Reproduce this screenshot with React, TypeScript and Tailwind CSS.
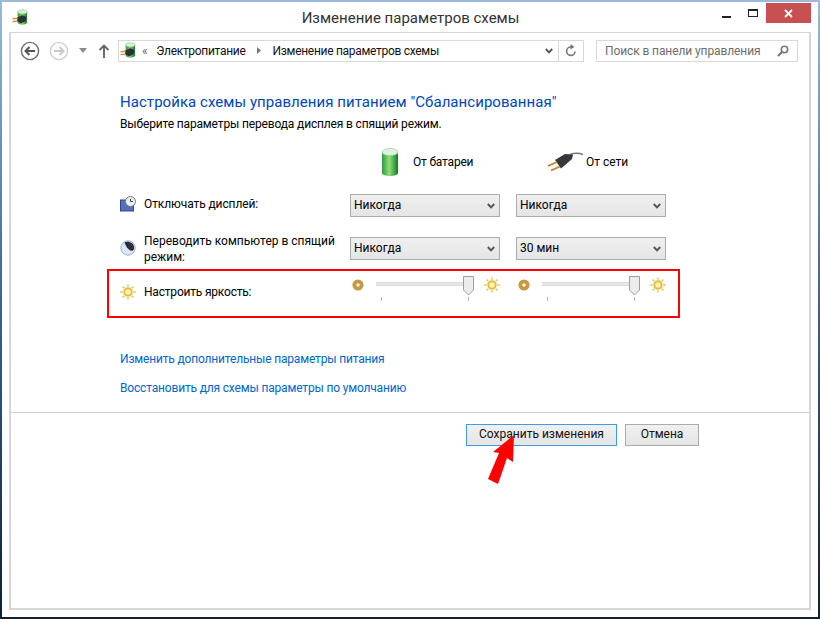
import React from "react";

const font = { fontFamily: 'Roboto,"Noto Sans",sans-serif' };

function PowerIcon({ size = 18, id }: { size?: number; id: string }) {
  return (
    <svg width={size} height={size} viewBox="0 0 18 18">
      <defs>
        <linearGradient id={id} x1="0" x2="1" y1="0" y2="0">
          <stop offset="0" stopColor="#2f9b37" />
          <stop offset="0.5" stopColor="#6fd36a" />
          <stop offset="1" stopColor="#1e7f2e" />
        </linearGradient>
      </defs>
      <path d="M6 3 C6 1 16 1 16 3 L16 14 C16 17.5 6 17.5 6 14 Z" fill={`url(#${id})`} />
      <ellipse cx="11" cy="3" rx="5" ry="2.2" fill="#d8f0d4" stroke="#86b987" strokeWidth="0.5" />
      <path d="M5.5 9 L11 6.5 L15.5 8.5 L14.5 13 L9.5 15 L5.5 13 Z" fill="#2d3034" />
      <path d="M0.5 10.5 L6 9.8 M0.5 13.4 L6 12.8" stroke="#c2922f" strokeWidth="1.5" />
    </svg>
  );
}

function Sun() {
  const rays = [0, 45, 90, 135, 180, 225, 270, 315];
  return (
    <svg width="16" height="16" viewBox="0 0 16 16">
      {rays.map((a) => (
        <path key={a} d="M7.1 0.4 H8.9 L8.5 3 H7.5 Z" fill="#d6c56a" transform={`rotate(${a} 8 8)`} />
      ))}
      <circle cx="8" cy="8" r="3.7" fill="#fbf3b8" stroke="#e3bd38" strokeWidth="1.9" />
      <circle cx="8" cy="8" r="5.4" fill="none" stroke="#efe6b0" strokeWidth="0.6" />
    </svg>
  );
}

function SmallSun() {
  return (
    <svg width="12" height="12" viewBox="0 0 12 12">
      <circle cx="6" cy="6" r="3.6" fill="none" stroke="#c49a45" strokeWidth="4" />
      <circle cx="6" cy="6" r="1.4" fill="#fff8de" />
    </svg>
  );
}

function Chevron() {
  return (
    <svg width="8" height="6" viewBox="0 0 8 6">
      <path d="M0.8 1 L4 4.4 L7.2 1" fill="none" stroke="#555" strokeWidth="1.9" />
    </svg>
  );
}

function Select({ value }: { value: string }) {
  return (
    <div className="w-[150px] h-[23px] border border-[#acacac] bg-gradient-to-b from-[#f0f0f0] to-[#e5e5e5] flex items-center justify-between pl-[3px] pr-[4px] text-[12px] text-black">
      <span className="mb-[2px]">{value}</span>
      <Chevron />
    </div>
  );
}

function Slider() {
  return (
    <div className="w-[150px] h-[28px] flex items-start">
      <div className="mt-[2px] ml-[2px] w-[12px] h-[12px] flex"><SmallSun /></div>
      <div className="relative ml-[12px] w-[98px] h-[26px]">
        <div className="mt-[5px] w-[92px] h-[4px] bg-[#e7e7e7] border-y border-[#dcdcdc]" />
        <div className="flex justify-between w-[93px] mt-[11px] pl-[5px]">
          <div className="w-px h-[4px] bg-[#b5b5b5]" />
          <div className="w-px h-[4px] bg-[#b5b5b5]" />
        </div>
        <svg className="absolute left-[87px] -top-[1px]" width="11" height="20" viewBox="0 0 11 20">
          <path d="M0.5 0.5 H10.5 V14 L5.5 19 L0.5 14 Z" fill="#ececec" stroke="#9e9e9e" />
        </svg>
      </div>
      <div className="ml-[10px]"><Sun /></div>
    </div>
  );
}

export default function App() {
  return (
    <div
      className="relative w-[820px] h-[619px] overflow-hidden p-[2px] bg-gradient-to-b from-[#9dbbd8] via-[#3f6088] to-[#10212f]"
      style={font}
    >
      <div className="w-[816px] h-[615px] bg-white flex flex-col px-[7px] pb-[7px]">
        {/* title bar */}
        <div className="h-[30px] flex shrink-0">
          <div className="mt-[7px] ml-[3px]"><PowerIcon size={17} id="p1" /></div>
          <div className="flex-1 text-center text-[15px] leading-[20px] mt-[6px] text-[#333] pl-[79px]">Изменение параметров схемы</div>
          <div className="flex items-start text-black">
            <div className="w-[26px] h-[21px] flex justify-center pt-[14px]"><div className="w-[9px] h-[2px] bg-[#222]" /></div>
            <div className="w-[27px] h-[21px] flex justify-center pt-[7px]"><div className="w-[10px] h-[8px] border border-t-2 border-[#222]" /></div>
            <div className="w-[45px] h-[20px] mt-[1px] bg-[#c75050] flex items-center justify-center">
              <svg width="9" height="9" viewBox="0 0 9 9"><path d="M1 1 L8 8 M8 1 L1 8" stroke="#fff" strokeWidth="1.8" /></svg>
            </div>
          </div>
        </div>
        {/* frame */}
        <div className="relative flex-1 border-2 border-[#d6d6d6] border-t-[1.5px] flex flex-col">
          {/* toolbar */}
          <div className="h-[25px] mt-[5px] flex items-center shrink-0 pl-[9px]">
            <svg width="20" height="20" viewBox="0 0 20 20">
              <circle cx="10" cy="10" r="8.6" fill="#fff" stroke="#6f6f6f" strokeWidth="1.4" />
              <path d="M15 10 H6 M9.5 6 L5.5 10 L9.5 14" fill="none" stroke="#555" strokeWidth="2" />
            </svg>
            <svg className="ml-[9px]" width="20" height="20" viewBox="0 0 20 20">
              <circle cx="10" cy="10" r="8.6" fill="#fff" stroke="#cfcfcf" strokeWidth="1.4" />
              <path d="M5 10 H14 M10.5 6 L14.5 10 L10.5 14" fill="none" stroke="#c8c8c8" strokeWidth="2" />
            </svg>
            <svg className="ml-[10px]" width="8" height="5" viewBox="0 0 8 5"><path d="M0 0 H8 L4 5 Z" fill="#8a8a8a" /></svg>
            <svg className="ml-[11px]" width="12" height="14" viewBox="0 0 12 14">
              <path d="M6 14 V2 M1.5 6 L6 1.5 L10.5 6" fill="none" stroke="#666" strokeWidth="1.9" />
            </svg>
            {/* address */}
            <div className="ml-[8px] w-[466px] h-[22px] border border-[#d9d9d9] flex items-center text-[12px] text-[#111] tracking-[-0.3px]">
              <div className="ml-[1px] flex"><PowerIcon size={17} id="p2" /></div>
              <span className="ml-[5px] text-[#666] leading-none">«</span>
              <span className="ml-[9px]">Электропитание</span>
              <svg className="ml-[11px]" width="4" height="7" viewBox="0 0 4 7"><path d="M0 0 L4 3.5 L0 7 Z" fill="#777" /></svg>
              <span className="ml-[12px]">Изменение параметров схемы</span>
              <div className="flex-1 flex justify-end pr-[5px]"><Chevron /></div>
              <div className="w-[25px] h-full border-l border-[#d9d9d9] flex items-center justify-center">
                <svg width="12" height="13" viewBox="0 0 12 13">
                  <path d="M10 7.5 A4.2 4.2 0 1 1 6 3" fill="none" stroke="#777" strokeWidth="1.6" />
                  <path d="M5.5 0 L9.5 3 L5.5 5.5 Z" fill="#777" />
                </svg>
              </div>
            </div>
            {/* search */}
            <div className="ml-[12px] w-[202px] h-[22px] border border-[#d9d9d9] flex items-center justify-between pl-[8px] pr-[8px] text-[12px] text-[#6d6d6d] tracking-[-0.1px]">
              <span>Поиск в панели управления</span>
              <svg width="12" height="12" viewBox="0 0 12 12">
                <circle cx="7.5" cy="4.5" r="3.2" fill="none" stroke="#777" strokeWidth="1.6" />
                <path d="M5 7 L1 11" stroke="#777" strokeWidth="2.2" />
              </svg>
            </div>
          </div>

          {/* content */}
          <div className="pl-[109px] pt-[29px] text-[12px] text-black">
            <h1 className="text-[15px] leading-[20px] text-[#0046b4] tracking-[0.05px]">Настройка схемы управления питанием "Сбалансированная"</h1>
            <p className="mt-[4px] leading-[16px] tracking-[-0.15px]">Выберите параметры перевода дисплея в спящий режим.</p>

            <div className="mt-[10px] flex h-[40px] items-center ml-[230px]">
              <div className="w-[166px] flex items-center pl-[30px]">
                <svg width="20" height="30" viewBox="0 0 20 30">
                  <defs>
                    <linearGradient id="bat" x1="0" x2="1" y1="0" y2="0">
                      <stop offset="0" stopColor="#2f9b37" />
                      <stop offset="0.45" stopColor="#8ee07a" />
                      <stop offset="1" stopColor="#15782a" />
                    </linearGradient>
                  </defs>
                  <path d="M2 5 H18 V26 C18 30 2 30 2 26 Z" fill="url(#bat)" />
                  <ellipse cx="10" cy="5" rx="8" ry="3.6" fill="#dff0dd" stroke="#9fc5a0" strokeWidth="0.6" />
                </svg>
                <span className="ml-[13px] tracking-[-0.2px]">От батареи</span>
              </div>
              <div className="ml-[31px] flex items-center">
                <svg width="36" height="22" viewBox="0 0 36 22">
                  <path d="M36 3.5 C31 1.5 27 2 23 3.5" fill="none" stroke="#777" strokeWidth="1.6" />
                  <path d="M8 9 L18 3 L26 3.5 L25 8 L14 17.5 Z" fill="#34383d" />
                  <path d="M1 15 L10 11 M4 19.5 L13 15.5" stroke="#b8862b" strokeWidth="1.9" />
                </svg>
                <span className="ml-[3px]">От сети</span>
              </div>
            </div>

            <div className="mt-[12px] flex items-start h-[23px]">
              <svg className="mt-[2px]" width="16" height="16" viewBox="0 0 16 16">
                <rect x="0.5" y="4" width="13" height="11" fill="#5570b8" stroke="#2e4690" />
                <circle cx="10.5" cy="5.5" r="5" fill="#eee" stroke="#777" />
                <path d="M10.5 3 V5.5 H13" fill="none" stroke="#444" />
              </svg>
              <span className="ml-[8px] w-[206px] leading-[20px] tracking-[-0.1px]">Отключать дисплей:</span>
              <Select value="Никогда" />
              <div className="w-[16px]" />
              <Select value="Никогда" />
            </div>

            <div className="mt-[20px] flex items-start h-[32px]">
              <svg className="mt-[3px]" width="16" height="16" viewBox="0 0 16 16">
                <circle cx="8" cy="8" r="7.2" fill="#dbe6f7" stroke="#9db1d4" />
                <path d="M4.5 2.5 C8 0.5 15 3 14 9 C12.5 13 7 10 4.5 2.5 Z" fill="#2b2d38" />
              </svg>
              <span className="ml-[8px] w-[206px] leading-[15.5px] -mt-[3px]">Переводить компьютер в спящий режим:</span>
              <Select value="Никогда" />
              <div className="w-[16px]" />
              <Select value="30 мин" />
            </div>

            <div className="mt-[8px] flex items-start h-[34px]">
              <div className="mt-[7px]"><Sun /></div>
              <span className="ml-[8px] w-[206px] leading-[16px] mt-[7px] tracking-[-0.2px]">Настроить яркость:</span>
              <Slider />
              <div className="w-[16px]" />
              <Slider />
            </div>

            <div className="mt-[40px] leading-[16px] text-[#0066cc] tracking-[-0.17px]">Изменить дополнительные параметры питания</div>
            <div className="mt-[13px] leading-[16px] text-[#0066cc] tracking-[-0.17px]">Восстановить для схемы параметры по умолчанию</div>
          </div>

          <div className="mt-[16px] h-px bg-[#cfcfcf]" />

          <div className="mt-[11px] flex pl-[455px]">
            <button className="w-[151px] h-[22px] pb-[2px] border border-[#3f9ae8] bg-gradient-to-b from-[#f0f0f0] to-[#e5e5e5] text-[12px] text-[#111]">Сохранить изменения</button>
            <button className="ml-[8px] w-[74px] h-[22px] pb-[2px] border border-[#acacac] bg-gradient-to-b from-[#f0f0f0] to-[#e5e5e5] text-[12px] text-[#111]">Отмена</button>
          </div>
        </div>
      </div>

      {/* annotation overlays */}
      <div className="absolute left-[107px] top-[269px] w-[573px] h-[49px] border-2 border-[#f00]" />
      <svg className="absolute left-[485px] top-[432px]" width="32" height="54" viewBox="0 0 32 54">
        <path d="M29 3 L28 30 L22 26 L13 52 L3 47 L14 21 L8 20 Z" fill="#f00" />
      </svg>
    </div>
  );
}
